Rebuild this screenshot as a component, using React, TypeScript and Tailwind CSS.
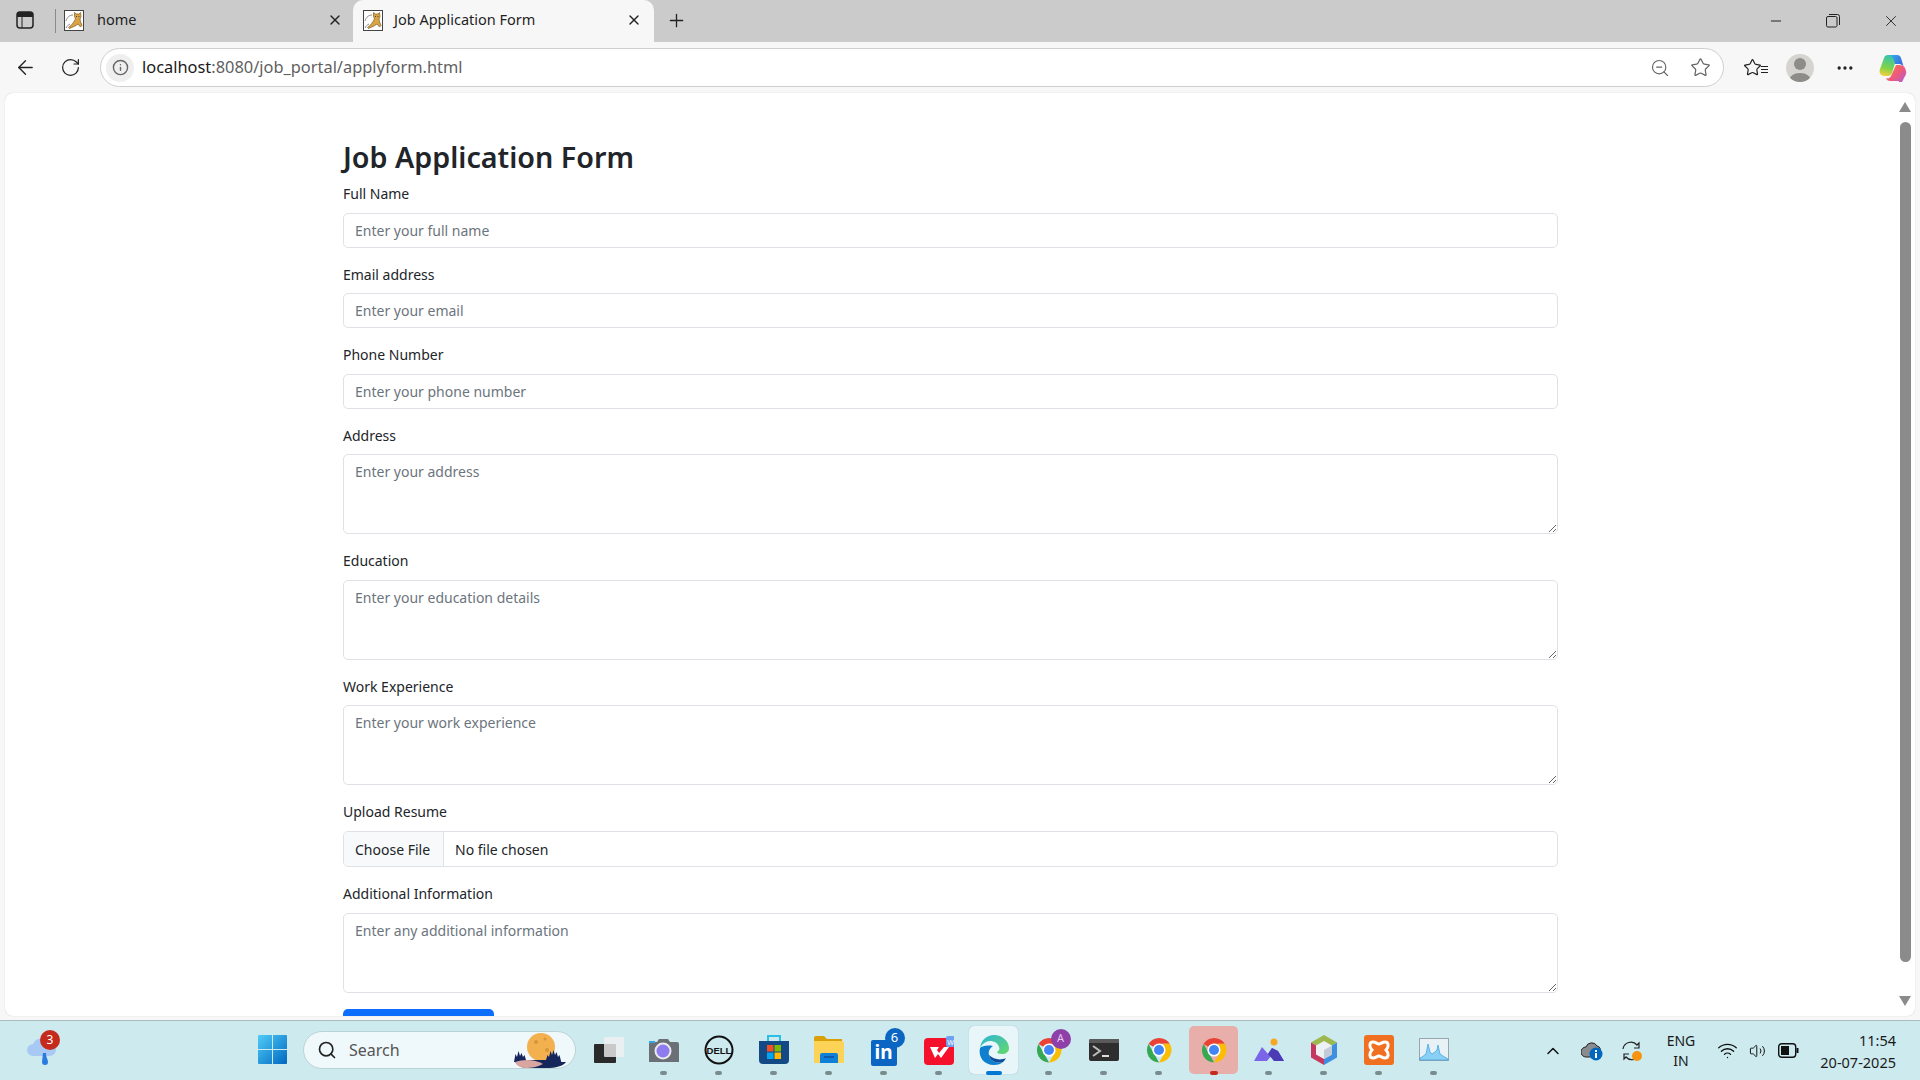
import { ArrowLeft, ChevronUp, Info, Minus, MoreHorizontal, Plus, RotateCw, Search, Star, Volume2, Wifi, X, ZoomOut } from 'lucide-react';

const FONT = "font-['Noto_Sans',sans-serif]";

function TomcatIcon() {
  return (
    <svg width="20" height="21" viewBox="0 0 20 21" className="shrink-0">
      <rect x="0.500" y="0.500" width="19" height="20" fill="#fff" stroke="#444" />
      <path d="M2 11c1-4 4-6 7-6M2 18c1-2 2-3 4-4" stroke="#8a8a8a" strokeWidth="1" fill="none" />
      <path d="M10.500 2.500l2 1.500h2.500l1.500-1.500.5 4-1 2.500.5 2.500 1.500 4-1.500 1.500-2.500-3-3 2-5.500 2.500-1-1 3.500-3 2-3 1.500-2.500-1-2.500z" fill="#d9a441" stroke="#6b4a1a" strokeWidth="0.600" />
      <path d="M12 6.500h1M14.500 6.500h1" stroke="#333" strokeWidth="0.800" />
    </svg>
  );
}

function ChromeIcon({ size = 30 }: { size?: number }) {
  return (
    <svg width={size} height={size} viewBox="0 0 48 48">
      <path d="M24 24 7.200 14.300A20 20 0 0 1 41.300 14H24z" fill="#ea4335" />
      <path d="M24 44a20 20 0 0 1-16.800-29.700L17 31z" fill="#34a853" />
      <path d="M24 44l10-17-3-13h10.300A20 20 0 0 1 24 44z" fill="#fbbc04" />
      <circle cx="24" cy="24" r="10.500" fill="#fff" />
      <circle cx="24" cy="24" r="8" fill="#4285f4" />
    </svg>
  );
}

function EdgeIcon() {
  return (
    <svg width="32" height="32" viewBox="0 0 32 32">
      <defs>
        <linearGradient id="edgeA" x1="0" y1="0" x2="1" y2="1">
          <stop offset="0" stopColor="#2bb5d8" />
          <stop offset="1" stopColor="#66d96a" />
        </linearGradient>
      </defs>
      <path d="M2 14C3 6 9 1 16 1c8 0 15 6 15 13 0 4-3 6-7 6-3 0-5-1-5-2 2-1 3-3 2-5-1-4-5-6-9-6-4 0-8 3-10 7z" fill="url(#edgeA)" />
      <path d="M2 14c-2 9 4 17 14 17 4 0 7-1 9-3-7 2-13-1-14-7-1-4 1-7 4-9-6-1-11 0-13 2z" fill="#0f7fd0" />
      <path d="M11 21c1 6 7 9 14 7 1-1 2-2 3-4-6 3-13 1-17-3z" fill="#0b4f9c" />
    </svg>
  );
}

function Copilot() {
  return (
    <svg width="28" height="28" viewBox="0 0 28 28">
      <defs>
        <linearGradient id="copA" x1="0" y1="0" x2="1" y2="0.600">
          <stop offset="0" stopColor="#2fb7e8" />
          <stop offset="1" stopColor="#3d66e0" />
        </linearGradient>
        <linearGradient id="copB" x1="0" y1="0" x2="1" y2="1">
          <stop offset="0" stopColor="#f5803c" />
          <stop offset="0.500" stopColor="#ef5a7a" />
          <stop offset="1" stopColor="#a45de6" />
        </linearGradient>
        <linearGradient id="copC" x1="0.500" y1="0" x2="0.300" y2="1">
          <stop offset="0" stopColor="#35c4b0" />
          <stop offset="0.600" stopColor="#7ed348" />
          <stop offset="1" stopColor="#f7cf3c" />
        </linearGradient>
      </defs>
      <path d="M9 1c-2 0-3.500 1-4 3L1 15c-1.500 4 1 7 4 7h4c2 0 3-1 4-3l4-13c-1-3-4-5-8-5z" fill="url(#copC)" />
      <path d="M9 1h9c2 0 3.500 1 4 3l3 10c-1-3-3-4-5-4h-4l-1-4c-1-3-3-5-6-5z" fill="url(#copA)" />
      <path d="M20 27h-9c-2 0-3.500-1-4-3 2 1 4 0 5-2l5-11h3c3 0 5 1 6 3l1 3c1 3-1 5-2 7l-2 4c-.5 2-2 3-4 3z" fill="url(#copB)" />
    </svg>
  );
}

function Dock({ active, tile, noDot, children }: { active?: 'blue' | 'red'; tile?: string; noDot?: boolean; children: React.ReactNode }) {
  return (
    <div className="relative flex h-[60px] w-[55px] shrink-0 items-center justify-center">
      {tile && <div className={`absolute top-[5px] left-[3px] h-[48px] w-[49px] rounded-[5px] ${tile}`} />}
      <div className="relative -translate-y-[1px]">{children}</div>
      {active === undefined && !noDot && <div className="absolute bottom-[6px] h-[4px] w-[7px] rounded-full bg-[#7b8c8f]" />}
      {active === 'blue' && <div className="absolute bottom-[6px] h-[4px] w-[16px] rounded-full bg-[#0078d4]" />}
      {active === 'red' && <div className="absolute bottom-[6px] h-[4px] w-[8px] rounded-full bg-[#c42b1c]" />}
    </div>
  );
}

function Field({ label, placeholder, area }: { label: string; placeholder: string; area?: boolean }) {
  return (
    <div className="mb-[16px]">
      <label className="mb-[8px] block text-[14px] leading-[21.6px] text-[#212529]">{label}</label>
      {area ? (
        <textarea
          placeholder={placeholder}
          className="block h-[80px] w-full rounded-[5px] border border-[#dee2e6] px-[11px] py-[6px] text-[14px] leading-[21.6px] placeholder:text-[#6c757d]"
        />
      ) : (
        <input
          placeholder={placeholder}
          className="block h-[35px] w-full rounded-[5px] border border-[#dee2e6] px-[11px] text-[14px] placeholder:text-[#6c757d]"
        />
      )}
    </div>
  );
}

export default function App() {
  return (
    <div className={`flex h-screen w-screen flex-col overflow-hidden bg-[#f7f7f7] ${FONT}`}>
      {/* Tab strip */}
      <div className="flex h-[42px] shrink-0 items-center bg-[#cbcbcb]">
        <div className="flex w-[50px] shrink-0 -translate-y-[1px] items-center justify-center pb-[1px]">
          <svg width="18" height="18" viewBox="0 0 18 18" fill="none">
            <rect x="1" y="1" width="16" height="16" rx="3" stroke="#222" strokeWidth="1.500" />
            <path d="M1 5a4 4 0 0 1 4-4h8a4 4 0 0 1 4 4v1H1z" fill="#222" />
            <path d="M6 6v11" stroke="#222" />
          </svg>
        </div>
        <div className="ml-[5px] h-[24px] w-px bg-[#8a8a8a]" />
        <div className="flex h-full w-[297px] shrink-0 items-center pb-[2px] pl-[8px] pr-[10px]">
          <TomcatIcon />
          <span className="ml-[13px] text-[14.500px] text-[#1f1f1f]">home</span>
          <X size={16} className="ml-auto text-[#222]" />
        </div>
        <div className="flex h-full w-[301px] shrink-0 items-center rounded-t-[10px] bg-[#f7f7f7] pb-[2px] pl-[10px] pr-[12px]">
          <TomcatIcon />
          <span className="ml-[11px] text-[14.500px] text-[#1f1f1f]">Job Application Form</span>
          <X size={16} className="ml-auto text-[#222]" />
        </div>
        <div className="flex w-[44px] items-center justify-center pb-[2px]">
          <Plus size={21} strokeWidth={1.5} className="text-[#222]" />
        </div>
        <div className="ml-auto flex items-center">
          <div className="flex w-[58px] justify-center pl-[2px]">
            <Minus size={16} strokeWidth={1.5} className="text-[#222]" />
          </div>
          <div className="flex w-[58px] justify-center">
            <svg width="14" height="14" viewBox="0 0 14 14" fill="none" stroke="#222">
              <rect x="0.500" y="2.500" width="10.500" height="10.500" rx="1.500" />
              <path d="M3 .5h8.500A2 2 0 0 1 13.500 2.500V11" />
            </svg>
          </div>
          <div className="flex w-[58px] justify-center">
            <X size={18} strokeWidth={1.2} className="text-[#222]" />
          </div>
        </div>
      </div>

      {/* Toolbar */}
      <div className="flex h-[51px] shrink-0 items-center">
        <div className="flex w-[50px] justify-center">
          <ArrowLeft size={23} strokeWidth={1.4} className="text-[#222]" />
        </div>
        <div className="flex w-[40px] justify-center">
          <RotateCw size={21} strokeWidth={1.4} className="text-[#222]" />
        </div>
        <div className="ml-[10px] flex h-[39px] w-[1624px] shrink-0 items-center rounded-full border border-[#cfcfcf] bg-white pl-[5px] pr-[12px]">
          <div className="flex h-[28px] w-[28px] items-center justify-center rounded-full bg-[#efefef]">
            <Info size={17} className="text-[#666]" />
          </div>
          <div className="ml-[8px] text-[16.400px] text-[#1a1a1a]">
            localhost<span className="text-[#5f5f5f]">:8080/job_portal/applyform.html</span>
          </div>
          <ZoomOut size={20} strokeWidth={1.4} className="ml-auto text-[#666]" />
          <Star size={21} strokeWidth={1.4} className="ml-[20px] text-[#666]" />
        </div>
        <div className="relative ml-[18px] flex w-[26px] items-center justify-center">
          <Star size={19} strokeWidth={1.5} className="-ml-[6px] text-[#222]" />
          <div className="absolute right-[0px] top-[8px] flex flex-col gap-[2px]">
            <div className="h-px w-[7px] bg-[#222]" />
            <div className="h-px w-[7px] bg-[#222]" />
            <div className="h-px w-[7px] bg-[#222]" />
          </div>
        </div>
        <div className="ml-[18px] flex h-[28px] w-[28px] items-end justify-center overflow-hidden rounded-full bg-[#d5d4d0]">
          <svg width="28" height="28" viewBox="0 0 28 28" fill="#8e8c88">
            <circle cx="14" cy="10" r="6" />
            <path d="M3 28c0-6 5-9 11-9s11 3 11 9z" />
          </svg>
        </div>
        <div className="ml-[17px] flex w-[28px] justify-center">
          <MoreHorizontal size={20} className="text-[#222]" />
        </div>
        <div className="ml-[20px] flex">
          <Copilot />
        </div>
      </div>

      {/* Page */}
      <div className="relative mx-[5px] h-[923px] shrink-0 overflow-hidden rounded-[8px] bg-white pl-[338px] pt-[47px] shadow-[0_0_1px_rgba(0,0,0,0.25)]">
        <div className="w-[1215px]">
          <h2 className="mb-[8px] text-[28.700px] leading-[34.900px] font-semibold text-[#212529]">Job Application Form</h2>
          <Field label="Full Name" placeholder="Enter your full name" />
          <Field label="Email address" placeholder="Enter your email" />
          <Field label="Phone Number" placeholder="Enter your phone number" />
          <Field label="Address" placeholder="Enter your address" area />
          <Field label="Education" placeholder="Enter your education details" area />
          <Field label="Work Experience" placeholder="Enter your work experience" area />
          <div className="mb-[16px]">
            <div className="mb-[8px] text-[14px] leading-[21.6px] text-[#212529]">Upload Resume</div>
            <div className="flex h-[36px] items-center overflow-hidden rounded-[5px] border border-[#dee2e6] text-[14px] text-[#212529]">
              <div className="flex h-full w-[100px] items-center border-r border-[#dee2e6] bg-[#f8f9fa] pl-[11px]">Choose File</div>
              <div className="pl-[11px]">No file chosen</div>
            </div>
          </div>
          <Field label="Additional Information" placeholder="Enter any additional information" area />
          <div className="h-[36px] w-[151px] rounded-[5px] bg-[#0d6efd]" />
        </div>

        {/* Scrollbar */}
        <div className="absolute right-[4px] top-[9px] h-0 w-0 border-x-[6px] border-b-[10px] border-x-transparent border-b-[#8b8b8b]" />
        <div className="absolute right-[4px] top-[29px] h-[840px] w-[11px] rounded-full bg-[#8b8b8b]" />
        <div className="absolute right-[4px] top-[903px] h-0 w-0 border-x-[6px] border-t-[10px] border-x-transparent border-t-[#8b8b8b]" />
      </div>

      {/* Taskbar */}
      <div className="mt-[4px] flex h-[60px] shrink-0 items-center border-t border-[#a9bdc0] bg-[#cdeaee]">
        <div className="relative flex h-full w-[244px] shrink-0 items-center pl-[26px]">
          <svg width="30" height="32" viewBox="0 0 30 32">
            <path d="M7 21a6 6 0 0 1 0-12 9 9 0 0 1 16-1 6 6 0 0 1 1 13z" fill="#a9c9f5" />
            <path d="M17 18h3c0 5 2 6 2 9a3 3 0 0 1-6 0z" fill="#2a7be0" />
          </svg>
          <div className="absolute left-[40px] top-[9px] flex h-[20px] w-[20px] items-center justify-center rounded-full bg-[#c42b1c] text-[12px] text-white">3</div>
        </div>
        <div className="flex w-[55px] shrink-0 -translate-y-[1px] justify-center pl-[1px]">
          <svg width="29" height="29" viewBox="0 0 29 29">
            <defs>
              <linearGradient id="winA" x1="0" y1="0" x2="1" y2="1">
                <stop offset="0" stopColor="#4fcdf8" />
                <stop offset="1" stopColor="#0067c0" />
              </linearGradient>
            </defs>
            <path d="M0 1a1 1 0 0 1 1-1h13v14H0zM15 0h13a1 1 0 0 1 1 1v13H15zM0 15h14v14H1a1 1 0 0 1-1-1zM15 15h14v13a1 1 0 0 1-1 1H15z" fill="url(#winA)" />
          </svg>
        </div>
        <div className="relative ml-[4px] mr-[5px] flex h-[38px] w-[273px] shrink-0 -translate-y-[1px] items-center rounded-full border border-[#bcd3d6] bg-[#eff8fa] pl-[13px]">
          <Search size={20} strokeWidth={2} className="text-[#222]" />
          <span className="ml-[12px] text-[16px] text-[#555]">Search</span>
          <svg width="58" height="42" viewBox="0 0 58 42" className="absolute right-[6px] bottom-[-2px]">
            <circle cx="30" cy="19" r="14" fill="#f2b04e" />
            <circle cx="25" cy="14" r="2" fill="#d99637" />
            <circle cx="34" cy="11" r="1.500" fill="#d99637" />
            <circle cx="36" cy="22" r="2" fill="#d99637" />
            <path d="M3 34l1.500-8 1.500 3 1.500-6 1.500 5 1.500-3 1.500 4 1.500-2 1.500 5h20l1.500-5 1.500 2 1.500-6 1.500 4 1.500-5 1.500 5 1.500-3 1.500 5 1.500-2 2 8z" fill="#14265c" />
            <path d="M4 34h51c-3 4-10 6-20 6H18c-7 0-11-2-14-6z" fill="#14265c" />
            <path d="M4 34c8-3 20-3 28 2-6 3-12 4-16 4-6 0-10-2-12-6z" fill="#d9a5a0" />
          </svg>
        </div>
        <Dock noDot>
          <svg width="32" height="28" viewBox="0 0 32 28">
            <rect x="1" y="8" width="22" height="19" rx="1" fill="#2a2a2a" />
            <rect x="11" y="1" width="20" height="20" rx="1" fill="#f1f1f1" opacity="0.800" />
          </svg>
        </Dock>
        <Dock>
          <svg width="30" height="26" viewBox="0 0 30 26">
            <path d="M2 5h6l2-3h9l2 3h7a2 2 0 0 1 2 2v18H0V7a2 2 0 0 1 2-2z" fill="#6b7076" />
            <circle cx="14" cy="14" r="8.500" fill="#e9eaec" />
            <circle cx="14" cy="14" r="6.500" fill="#8f7bf0" />
            <path d="M0 4h6v2H0z" fill="#2fa5e8" />
          </svg>
        </Dock>
        <Dock>
          <svg width="30" height="30" viewBox="0 0 30 30">
            <circle cx="15" cy="15" r="13.500" fill="none" stroke="#111" strokeWidth="2" />
            <text x="15" y="18.500" textAnchor="middle" fontSize="9.500" fontWeight="700" fill="#111" fontFamily="Liberation Sans">DELL</text>
          </svg>
        </Dock>
        <Dock>
          <svg width="30" height="31" viewBox="0 0 30 31">
            <path d="M9 7V2h12v5" fill="none" stroke="#29c0e8" strokeWidth="2" />
            <path d="M0 7h30v19a4 4 0 0 1-4 4H4a4 4 0 0 1-4-4z" fill="#134a86" />
            <rect x="8" y="11" width="6.500" height="6.500" fill="#f25022" />
            <rect x="15.500" y="11" width="6.500" height="6.500" fill="#7fba00" />
            <rect x="8" y="18.500" width="6.500" height="6.500" fill="#00a4ef" />
            <rect x="15.500" y="18.500" width="6.500" height="6.500" fill="#ffb900" />
          </svg>
        </Dock>
        <Dock>
          <svg width="30" height="27" viewBox="0 0 30 27">
            <path d="M0 2a2 2 0 0 1 2-2h8l3 3h15v8H0z" fill="#d9a008" />
            <path d="M0 5h28a2 2 0 0 1 2 2v20H0z" fill="#fcd257" />
            <path d="M6 19a2 2 0 0 1 2-2h14a2 2 0 0 1 2 2v8H6z" fill="#0f80d7" />
            <path d="M10 21h10" stroke="#0b4f9c" strokeWidth="1.500" />
          </svg>
        </Dock>
        <Dock>
          <div className="relative flex h-[26px] w-[26px] translate-y-[3px] items-center justify-center rounded-[2px] bg-[#0a66c2] text-[19px] font-bold text-white">in</div>
          <div className="absolute -right-[8px] -top-[9px] flex h-[20px] w-[20px] items-center justify-center rounded-full bg-[#0a66c2] text-[13px] text-white">6</div>
        </Dock>
        <Dock>
          <svg width="30" height="30" viewBox="0 0 30 30">
            <rect y="3" width="30" height="27" rx="4" fill="#f5102c" />
            <path d="M6 12l9 0-2 3 2 3 5-6h5l-8 11-3-4-3 4z" fill="#fff" />
            <rect x="22" y="1" width="9" height="11" rx="2" fill="#6fa1f0" />
            <text x="26.500" y="10" textAnchor="middle" fontSize="7" fill="#fff" fontFamily="Liberation Sans">W</text>
          </svg>
        </Dock>
        <Dock active="blue" tile="bg-[#e8f5f9] shadow-[0_0_1px_rgba(0,0,0,0.3)]">
          <EdgeIcon />
        </Dock>
        <Dock>
          <ChromeIcon />
          <div className="absolute -right-[7px] -top-[6px] flex h-[20px] w-[20px] items-center justify-center rounded-full bg-[#8e3fa8] text-[11px] text-[#e5c7ef]">A</div>
        </Dock>
        <Dock>
          <svg width="30" height="22" viewBox="0 0 30 22">
            <rect width="30" height="22" rx="2" fill="#2e2e2e" />
            <path d="M0 2a2 2 0 0 1 2-2h28v4H0z" fill="#5a5a5a" />
            <path d="M4 7l7 5-7 5" fill="none" stroke="#bbb" strokeWidth="2" />
            <path d="M13 17h7" stroke="#ddd" strokeWidth="2" />
          </svg>
        </Dock>
        <Dock>
          <ChromeIcon />
        </Dock>
        <Dock active="red" tile="bg-[#e8aeaa]">
          <ChromeIcon />
        </Dock>
        <Dock>
          <svg width="30" height="24" viewBox="0 0 30 24">
            <circle cx="20" cy="4" r="3.500" fill="#f7a823" />
            <path d="M0 23 8 9l6 7 4-6 6 3 6 10H20l-3-5-4 5z" fill="#7a65e8" />
            <path d="M14 16l4-6 6 3 6 10H20z" fill="#4b3bb5" />
          </svg>
        </Dock>
        <Dock>
          <svg width="26" height="30" viewBox="0 0 26 30">
            <path d="M13 0 26 7.500 13 15 0 7.500z" fill="#9cb84e" />
            <path d="M0 7.500 13 15v15L0 22.500z" fill="#c6375f" />
            <path d="M26 7.500 13 15v15l13-7.500z" fill="#3e8fe0" />
            <path d="M13 6l8 4.500v9L13 24l-8-4.500v-9z" fill="#eef1f3" />
            <path d="M13 15l8-4.500v9L13 24z" fill="#c2ccd6" />
          </svg>
        </Dock>
        <Dock>
          <svg width="30" height="30" viewBox="0 0 30 30">
            <rect width="30" height="30" rx="3" fill="#f06f20" />
            <path d="M9 7c3 0 4 2 6 2s3-2 6-2c4 0 4 5 1 8 3 3 3 8-1 8-3 0-4-2-6-2s-3 2-6 2c-4 0-4-5-1-8-3-3-3-8 1-8z" fill="none" stroke="#fff" strokeWidth="3" />
          </svg>
        </Dock>
        <Dock>
          <svg width="30" height="23" viewBox="0 0 30 23">
            <rect x="0.500" y="0.500" width="29" height="22" fill="#e7f1f6" stroke="#9aa6ad" />
            <path d="M1 20c3-1 4-3 6-4l2-10 2 8 2 2 3-2 2-2 1-5 2 9 3 2 5 3v1H1z" fill="#8ad0f5" stroke="#3a9fe0" strokeWidth="0.700" />
          </svg>
        </Dock>

        {/* System tray */}
        <div className="ml-auto mr-[24px] flex items-center text-[#111]">
          <div className="flex w-[40px] justify-center">
            <ChevronUp size={20} strokeWidth={1.8} />
          </div>
          <div className="relative flex w-[38px] justify-center">
            <svg width="22" height="20" viewBox="0 0 22 20">
              <path d="M5 16a5 5 0 0 1 0-10 6 6 0 0 1 11-1 4 4 0 0 1 2 7v4z" fill="#8a8d8f" stroke="#222" />
              <circle cx="15" cy="13" r="6.500" fill="#0067c0" />
              <rect x="14" y="12" width="2" height="5" fill="#fff" />
              <rect x="14" y="9" width="2" height="2" fill="#fff" />
            </svg>
          </div>
          <div className="flex w-[42px] justify-center">
            <svg width="22" height="22" viewBox="0 0 22 22" fill="none" stroke="#222" strokeWidth="1.200">
              <path d="M2 9a8 8 0 0 1 14-4l2-2v5h-5" />
              <path d="M16 18a8 8 0 0 1-11-1l-2 2v-5h5" />
              <circle cx="16" cy="16" r="5" fill="#f7930e" stroke="none" />
            </svg>
          </div>
          <div className="flex w-[56px] flex-col items-center text-[14px] leading-[20px] text-[#1a1a1a]">
            <span>ENG</span>
            <span>IN</span>
          </div>
          <div className="flex w-[37px] justify-center">
            <Wifi size={21} strokeWidth={1.5} />
          </div>
          <div className="flex w-[20px] justify-center pl-[3px]">
            <Volume2 size={20} strokeWidth={1.4} />
          </div>
          <div className="flex w-[44px] justify-center">
            <svg width="21" height="15" viewBox="0 0 21 15">
              <rect x="0.700" y="0.700" width="17" height="13.600" rx="3" fill="none" stroke="#111" strokeWidth="1.400" />
              <rect x="3" y="3" width="8" height="9" fill="#111" />
              <rect x="18.500" y="5" width="2" height="5" fill="#111" />
            </svg>
          </div>
          <div className="flex w-[86px] flex-col items-end text-[14.500px] leading-[22px] text-[#1a1a1a]">
            <span>11:54</span>
            <span>20-07-2025</span>
          </div>
        </div>
      </div>
    </div>
  );
}
